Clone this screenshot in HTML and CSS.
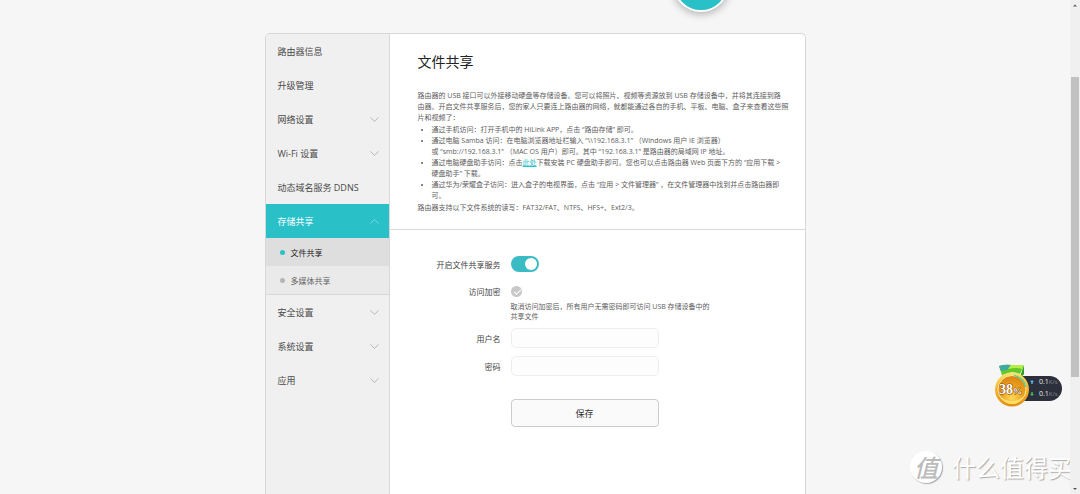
FILE: index.html
```html
<!DOCTYPE html>
<html lang="zh-CN">
<head>
<meta charset="utf-8">
<title>文件共享</title>
<link rel="stylesheet" href="styles.css">
</head>
<body>
<svg class="defs" aria-hidden="true">
  <symbol id="chev" viewBox="0 0 9 5"><path d="M.4.4 4.5 4.4 8.6.4" fill="none" stroke="currentColor" stroke-width=".8"/></symbol>
</svg>
<div class="avatar"></div>
<div class="panel">
  <nav class="side">
    <a class="item" href="#">路由器信息</a>
    <a class="item" href="#">升级管理</a>
    <a class="item" href="#">网络设置<svg class="chev"><use href="#chev"/></svg></a>
    <a class="item" href="#">Wi-Fi 设置<svg class="chev"><use href="#chev"/></svg></a>
    <a class="item" href="#">动态域名服务 DDNS</a>
    <a class="item active" href="#">存储共享<svg class="chev up"><use href="#chev"/></svg></a>
    <div class="subs">
      <a class="sub current" href="#">文件共享</a>
      <a class="sub" href="#">多媒体共享</a>
    </div>
    <a class="item" href="#">安全设置<svg class="chev"><use href="#chev"/></svg></a>
    <a class="item" href="#">系统设置<svg class="chev"><use href="#chev"/></svg></a>
    <a class="item" href="#">应用<svg class="chev"><use href="#chev"/></svg></a>
  </nav>
  <main class="main">
    <section class="intro">
      <h1>文件共享</h1>
      <p>路由器的 USB 接口可以外接移动硬盘等存储设备。您可以将照片、视频等资源放到 USB 存储设备中，并将其连接到路<br>由器。开启文件共享服务后，您的家人只要连上路由器的网络，就都能通过各自的手机、平板、电脑、盒子来查看这些照<br>片和视频了：</p>
      <ul>
        <li>通过手机访问：打开手机中的 HiLink APP，点击 “路由存储” 即可。</li>
        <li>通过电脑 Samba 访问：在电脑浏览器地址栏输入 “\\192.168.3.1” （Windows 用户 IE 浏览器）<br>或 “smb://192.168.3.1” （MAC OS 用户）即可。其中 “192.168.3.1” 是路由器的局域网 IP 地址。</li>
        <li>通过电脑硬盘助手访问：点击<a href="#">此处</a>下载安装 PC 硬盘助手即可。您也可以点击路由器 Web 页面下方的 “应用下载 &gt;<br>硬盘助手” 下载。</li>
        <li>通过华为/荣耀盒子访问：进入盒子的电视界面，点击 “应用 &gt; 文件管理器” ，在文件管理器中找到并点击路由器即<br>可。</li>
      </ul>
      <p>路由器支持以下文件系统的读写：FAT32/FAT、NTFS、HFS+、Ext2/3。</p>
    </section>
    <form class="form">
      <label for="share">开启文件共享服务</label>
      <input class="switch" id="share" type="checkbox" role="switch" checked>
      <label for="enc">访问加密</label>
      <input class="check" id="enc" type="checkbox" checked>
      <p class="hint">取消访问加密后，所有用户无需密码即可访问 USB 存储设备中的共享文件</p>
      <label for="user">用户名</label>
      <input class="text" id="user" type="text">
      <label for="pass">密码</label>
      <input class="text" id="pass" type="password">
      <button class="save" type="button">保存</button>
    </form>
  </main>
</div>

<div class="widget">
  <div class="speeds">
    <div><svg class="arrow blue" viewBox="0 0 5 5"><path d="M2.5 0 5 2.5H3.4V5H1.6V2.5H0z"/></svg>0.1<span>K/s</span></div>
    <div><svg class="arrow green" viewBox="0 0 5 5"><path d="M2.5 5 0 2.5H1.6V0H3.4V2.5H5z"/></svg>0.1<span>K/s</span></div>
  </div>
  <svg class="medal" viewBox="0 0 36 44">
    <defs>
      <linearGradient id="gold" x1="0" y1="0" x2="0" y2="1"><stop offset="0" stop-color="#ffe36a"/><stop offset=".5" stop-color="#f5b32c"/><stop offset="1" stop-color="#e08d12"/></linearGradient>
      <radialGradient id="face" cx=".5" cy=".8" r=".8"><stop offset="0" stop-color="#ffd95a"/><stop offset=".5" stop-color="#eda01f"/><stop offset="1" stop-color="#d98412"/></radialGradient>
    </defs>
    <path d="M5 2 9 13h17l4-12v9l-4 5H10z" fill="#2f9a1c"/>
    <path d="M5 2q6-2 12-1h13l-4 9q-7-3-11-1-4 1-7 2z" fill="#63c82a"/>
    <path d="M5 2q6-2 12-1l-4 5-6 1z" fill="#3fa9a0"/>
    <path d="M17 1h13l-2 4q-5-2-14 0z" fill="#b8ee4a"/>
    <circle cx="18" cy="25.500" r="17" fill="url(#gold)"/>
    <circle cx="18" cy="25.500" r="14" fill="url(#face)" stroke="#fff0a0" stroke-width="1"/>
    <path d="M20 11.500A14.500 14.500 0 0 1 32 23" fill="none" stroke="#5ed08f" stroke-width="1.500"/>
    <path d="M7 33q11 8 22 0-4 7-11 7T7 33z" fill="#ffdc62"/>
    <text class="pct" x="5" y="30">38<tspan class="sign">%</tspan></text>
  </svg>
</div>

<div class="mark"><span class="seal">值</span><span>什么值得买</span></div>

<div class="scroll" aria-hidden="true">
  <svg viewBox="0 0 10 10"><path d="M3 6.500 5 4.500 7 6.500z"/></svg>
  <i></i>
  <svg viewBox="0 0 10 10"><path d="M3 4 7 4 5 6z"/></svg>
</div>
</body>
</html>
```
FILE: styles.css
```css
* { box-sizing: border-box; }

body {
  margin: 0;
  height: 100vh;
  overflow: hidden;
  padding: 33px 10px 0 0;
  display: flex;
  justify-content: center;
  background: #f6f6f6;
  color: #5c5c5c;
  font-family: "Open Sans", "Noto Sans CJK SC", sans-serif;
  font-size: 8px;
}
.defs { position: absolute; width: 0; height: 0; }

.avatar {
  position: absolute;
  left: 673px;
  top: -44px;
  width: 56px;
  height: 56px;
  border: 2px solid #fff;
  border-radius: 50%;
  background: #29c0c8;
  box-shadow: 0 2px 8px rgba(0, 0, 0, .3);
}

.panel {
  display: flex;
  width: 100%;
  max-width: 541px;
  overflow: hidden;
  border: 1px solid #d8d8d8;
  border-bottom: 0;
  border-radius: 5px 5px 0 0;
  background: #fff;
}

/* Sidebar */
.side {
  flex: 0 0 124px;
  border-right: 1px solid #d8d8d8;
  background: #f0f0f0;
}
.item {
  display: flex;
  align-items: center;
  justify-content: space-between;
  height: 34px;
  padding: 0 10px 0 12px;
  color: #4a4a4a;
  font-size: 9px;
  text-decoration: none;
}
.chev { width: 9px; height: 5px; color: #aaa; }
.chev.up { transform: rotate(180deg); color: #8fe0e4; }
.active { background: #29c0c8; color: #fff; }
.subs { border-bottom: 1px solid #d8d8d8; background: #eaeaea; }
.sub {
  display: flex;
  align-items: center;
  gap: 6px;
  height: 28px;
  padding: 0 0 0 14px;
  color: #666;
  text-decoration: none;
}
.sub::before {
  content: "";
  width: 5px;
  height: 5px;
  border-radius: 50%;
  background: #b5b5b5;
}
.current { background: #dedede; color: #222; }
.current::before { background: #29c0c8; }

/* Content */
.main { flex: 1; }
.intro {
  padding: 18px 8px 16px 28px;
  border-bottom: 1px solid #d8d8d8;
  font-size: 7px;
  line-height: 11px;
}
.intro h1 {
  margin: 0 0 18px;
  color: #222;
  font-size: 14px;
  font-weight: 400;
  line-height: 20px;
}
.intro p { margin: 0; }
.intro ul { margin: 1px 0; padding-left: 14px; }
.intro a { color: #29c0c8; }

.form {
  display: grid;
  grid-template-columns: 111px 1fr;
  column-gap: 10px;
  align-items: center;
  justify-items: start;
  padding-top: 26px;
}
.form label { justify-self: end; color: #444; }
.form input { appearance: none; margin: 0; }
.form .switch {
  display: block;
  width: 28px;
  height: 16px;
  padding: 2px;
  border-radius: 8px;
  background: #3bbcc4;
}
.switch::before {
  content: "";
  display: block;
  width: 12px;
  height: 12px;
  margin-left: auto;
  border-radius: 50%;
  background: #fff;
}
.form .check {
  display: block;
  width: 11px;
  height: 11px;
  margin: 14px 0 3px;
  border-radius: 50%;
  background: #c8c8c8;
}
.form label[for="enc"] { padding-top: 11px; }
.check::before {
  content: "";
  display: block;
  width: 6px;
  height: 3px;
  margin: 3px 0 0 3px;
  border: solid #fff;
  border-width: 0 0 1px 1px;
  transform: rotate(-45deg);
}
.hint {
  grid-column: 2;
  width: 202px;
  margin: 2px 0 6px;
  font-size: 7px;
  line-height: 10px;
}
.form .text {
  width: 148px;
  height: 20px;
  border: 1px solid #eee;
  border-radius: 5px;
  background: #fdfdfd;
  font-size: 8px;
}
.form label[for="pass"] { padding-top: 8px; }
.form #pass { margin-top: 8px; }
.save {
  grid-column: 2;
  width: 148px;
  height: 28px;
  margin-top: 23px;
  padding: 0;
  border: 1px solid #ccc;
  border-radius: 4px;
  background: #fafafa;
  color: #333;
  font: 9px "Open Sans", "Noto Sans CJK SC", sans-serif;
}

/* Floating speed widget */
.widget {
  position: absolute;
  right: 18px;
  top: 370px;
  display: flex;
  align-items: center;
}
.speeds {
  width: 50px;
  height: 25px;
  margin-top: 6px;
  padding-left: 18px;
  border-radius: 0 13px 13px 0;
  background: #2c303c;
  color: #e8e8e8;
  font-size: 7px;
  line-height: 12px;
}
.speeds div { display: flex; align-items: center; }
.speeds span { color: #8a8a90; font-size: 6px; }
.arrow { width: 4px; height: 4px; margin-right: 5px; }
.blue { fill: #5bb8ee; }
.green { fill: #3fc25c; }
.medal { position: absolute; right: 32px; width: 36px; height: 44px; }
.pct { fill: #fff; stroke: #8a4a08; stroke-width: 1px; paint-order: stroke; font: bold 14px "Liberation Serif", serif; }
.sign { font-size: 9px; }

/* Watermark */
.mark {
  position: absolute;
  right: 8px;
  top: 451px;
  display: flex;
  align-items: center;
  gap: 10px;
  color: #fff;
  font-family: "Noto Sans CJK SC", sans-serif;
  font-size: 24px;
  line-height: 32px;
  text-shadow: 1px 1px 1px #aaa;
}
.seal {
  width: 32px;
  height: 32px;
  border-radius: 50%;
  background: #fff;
  box-shadow: 1px 1px 1px #aaa;
  color: #bbb;
  font-size: 24px;
  font-style: italic;
  font-weight: 500;
  text-align: center;
  text-shadow: none;
}

/* Scroll track */
.scroll {
  position: fixed;
  right: 0;
  top: 0;
  bottom: 0;
  width: 10px;
  display: flex;
  flex-direction: column;
  justify-content: space-between;
  background: #f0f0f0;
}
.scroll svg { width: 10px; height: 10px; fill: #555; }
.scroll i {
  position: absolute;
  top: 77px;
  left: 1px;
  right: 1px;
  height: 300px;
  background: #c1c1c1;
}
```
